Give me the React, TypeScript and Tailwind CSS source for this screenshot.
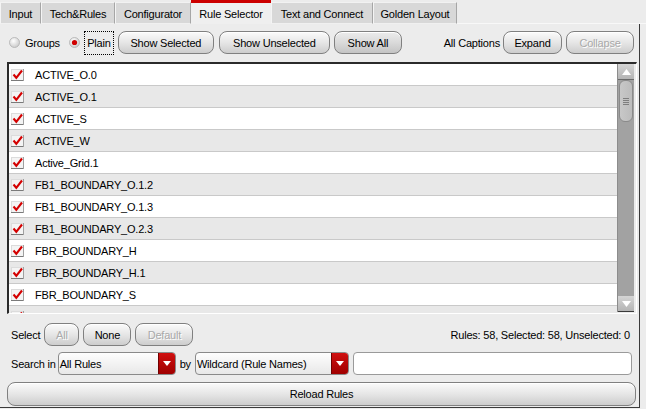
import React from "react";

const rows = [
  "ACTIVE_O.0",
  "ACTIVE_O.1",
  "ACTIVE_S",
  "ACTIVE_W",
  "Active_Grid.1",
  "FB1_BOUNDARY_O.1.2",
  "FB1_BOUNDARY_O.1.3",
  "FB1_BOUNDARY_O.2.3",
  "FBR_BOUNDARY_H",
  "FBR_BOUNDARY_H.1",
  "FBR_BOUNDARY_S",
  "",
];

const tabs = [
  { label: "Input", w: "w-[41px]" },
  { label: "Tech&Rules", w: "w-[74px]" },
  { label: "Configurator", w: "w-[76px]" },
  { label: "Rule Selector", w: "w-[80px]", active: true },
  { label: "Text and Connect", w: "w-[102px]" },
  { label: "Golden Layout", w: "w-[84px]" },
];

function Btn({
  children,
  className = "",
  disabled = false,
  dark = false,
}: {
  children: React.ReactNode;
  className?: string;
  disabled?: boolean;
  dark?: boolean;
}) {
  return (
    <div
      className={`h-[23px] rounded-[8px] border border-[#808080] flex items-center justify-center pt-[1px] shadow-[inset_0_1px_0_#ffffff] ${
        dark
          ? "bg-linear-to-b from-[#ececec] via-[#dadada] to-[#c4c4c4]"
          : "bg-linear-to-b from-[#fbfbfb] via-[#e6e6e6] to-[#cdcdcd]"
      } ${
        disabled
          ? "text-[#a9a9a9] [text-shadow:1px_1px_0_#ffffff]"
          : "text-black"
      } ${className}`}
    >
      {children}
    </div>
  );
}

function Check() {
  return (
    <svg width="13" height="12" viewBox="0 0 13 12">
      <rect x="0.5" y="0.5" width="12" height="11" fill="#f4f4f4" stroke="#dcdcdc" />
      <line x1="0" y1="11.5" x2="13" y2="11.5" stroke="#7a7a7a" />
      <line x1="12.5" y1="0" x2="12.5" y2="12" stroke="#a0a0a0" />
      <path d="M2.5 5.5 L5.3 8.8 L11 1.5" fill="none" stroke="#d40000" strokeWidth="2.1" />
    </svg>
  );
}

function Radio({ checked }: { checked?: boolean }) {
  return (
    <svg width="11" height="11" viewBox="0 0 11 11">
      <defs>
        <radialGradient id={checked ? "rg1" : "rg0"} cx="0.4" cy="0.35" r="0.7">
          <stop offset="0" stopColor="#ffffff" />
          <stop offset="1" stopColor="#c8c8c8" />
        </radialGradient>
      </defs>
      <circle cx="5.5" cy="5.5" r="5" fill={`url(#${checked ? "rg1" : "rg0"})`} stroke="#b0b0b0" strokeWidth="0.8" />
      {checked && <circle cx="5.5" cy="5.5" r="2.6" fill="#d00000" />}
    </svg>
  );
}

function SelectBox({ label, className }: { label: string; className: string }) {
  return (
    <div
      className={`h-[23px] flex items-stretch rounded-[4px] border border-[#8a8a8a] bg-linear-to-b from-[#fefefe] to-[#e8e8e8] ${className}`}
    >
      <div className="flex-1 flex items-center pl-[1px] pt-[1px]">{label}</div>
      <div className="w-[17px] rounded-r-[3px] bg-linear-to-b from-[#d01010] to-[#a00000] flex items-center justify-center border-l border-[#700000]">
        <svg width="8" height="5" viewBox="0 0 8 5">
          <path d="M0 0 L8 0 L4 5 Z" fill="#ffffff" />
        </svg>
      </div>
    </div>
  );
}

export default function App() {
  return (
    <div
      className="w-[646px] h-[409px] overflow-hidden bg-[#ececec] text-[11px] text-black tracking-[-0.2px] leading-none"
      style={{ fontFamily: '"Liberation Sans", Arial, sans-serif' }}
    >
      {/* Tabs */}
      <div className="h-[24px] flex items-end">
        {tabs.map((t) =>
          t.active ? (
            <div
              key={t.label}
              className={`${t.w} h-[24px] border-t-[3px] border-[#cc0000] bg-[#efefef] flex items-center justify-center pt-[1px]`}
            >
              {t.label}
            </div>
          ) : (
            <div
              key={t.label}
              className={`${t.w} h-[22px] bg-[#d8d8d8] border-t border-l border-t-[#f2f2f2] border-l-[#f4f4f4] border-r border-r-[#a6a6a6] border-b border-b-[#f0f0f0] flex items-center justify-center pt-[3px]`}
            >
              {t.label}
            </div>
          )
        )}
        <div className="flex-1 h-[1px] bg-[#f8f8f8]" />
      </div>

      {/* Panel */}
      <div className="w-[640px] h-[384px] bg-[#ececec] border-r border-b border-r-[#3a3a3a] border-b-[#3a3a3a] flex flex-col">
        {/* Toolbar */}
        <div className="mt-[6px] h-[25px] flex items-center">
          <div className="ml-[9px] flex items-center">
            <Radio />
          </div>
          <span className="ml-[5px] pt-[1px]">Groups</span>
          <div className="ml-[9px] flex items-center">
            <Radio checked />
          </div>
          <div className="ml-[4px] w-[30px] h-[24px] border border-dotted border-black flex items-center justify-center pt-[1px]">
            Plain
          </div>
          <Btn className="ml-[4px] w-[96px]">Show Selected</Btn>
          <Btn className="ml-[5px] w-[111px]">Show Unselected</Btn>
          <Btn className="ml-[4px] w-[68px]" dark>
            Show All
          </Btn>
          <span className="ml-auto pt-[1px]">All Captions</span>
          <Btn className="ml-[3px] w-[59px]">Expand</Btn>
          <Btn className="ml-[4px] mr-[5px] w-[68px]" disabled>
            Collapse
          </Btn>
        </div>

        {/* List */}
        <div className="mt-[7px] ml-[7px] w-[630px] h-[252px] border-t-2 border-l-2 border-t-[#2a2a2a] border-l-[#2a2a2a] border-b border-r border-b-[#ffffff] border-r-[#ffffff] flex overflow-hidden">
          <div className="flex-1 flex flex-col overflow-hidden">
            {rows.map((r, i) => (
              <div
                key={i}
                className={`h-[22px] shrink-0 flex items-center border-b border-[#c9c9c9] ${
                  i % 2 === 0 ? "bg-white" : "bg-[#e8e8e8]"
                }`}
              >
                <div className="ml-[2px] flex items-center">
                  <Check />
                </div>
                <span className="ml-[11px] pt-[2px]">{r}</span>
              </div>
            ))}
          </div>
          {/* Scrollbar */}
          <div className="w-[17px] flex flex-col bg-[#a2a2a2] border-l border-[#8c8c8c] mr-[2px] mb-[1px]">
            <div className="h-[16px] bg-linear-to-b from-[#d4d4d4] to-[#b4b4b4] border-b border-[#6a6a6a] flex items-center justify-center">
              <svg width="9" height="6" viewBox="0 0 9 6">
                <path d="M0 6 L9 6 L4.5 0 Z" fill="#ffffff" />
              </svg>
            </div>
            <div className="h-[42px] mx-[1px] rounded-[6px] bg-linear-to-r from-[#c8c8c8] to-[#bcbcbc] border border-[#8a8a8a] flex flex-col items-center justify-center gap-[1px]">
              {[0, 1, 2, 3].map((k) => (
                <div key={k} className="w-[6px] h-[1px] bg-[#7e7e7e]" />
              ))}
            </div>
            <div className="flex-1" />
            <div className="h-[16px] bg-linear-to-b from-[#d4d4d4] to-[#b4b4b4] border-b border-[#3a3a3a] flex items-center justify-center">
              <svg width="9" height="6" viewBox="0 0 9 6">
                <path d="M0 0 L9 0 L4.5 6 Z" fill="#ffffff" />
              </svg>
            </div>
          </div>
        </div>

        {/* Select row */}
        <div className="mt-[9px] h-[23px] flex items-center">
          <span className="ml-[11px] pt-[1px]">Select</span>
          <Btn className="ml-[4px] w-[35px]" disabled>
            All
          </Btn>
          <Btn className="ml-[4px] w-[48px]">None</Btn>
          <Btn className="ml-[4px] w-[58px]" disabled>
            Default
          </Btn>
          <span className="ml-auto mr-[9px] pt-[1px]">Rules: 58, Selected: 58, Unselected: 0</span>
        </div>

        {/* Search row */}
        <div className="mt-[6px] h-[23px] flex items-center">
          <span className="ml-[11px] pt-[1px]">Search in</span>
          <SelectBox label="All Rules" className="ml-[2px] w-[118px]" />
          <span className="ml-[4px] pt-[1px]">by</span>
          <SelectBox label="Wildcard (Rule Names)" className="ml-[4px] w-[154px]" />
          <div className="ml-[4px] flex-1 mr-[7px] h-[23px] rounded-[4px] border border-[#9a9a9a] bg-white" />
        </div>

        {/* Reload */}
        <Btn className="mt-[7px] ml-[7px] w-[629px] h-[24px]">Reload Rules</Btn>
      </div>
    </div>
  );
}
